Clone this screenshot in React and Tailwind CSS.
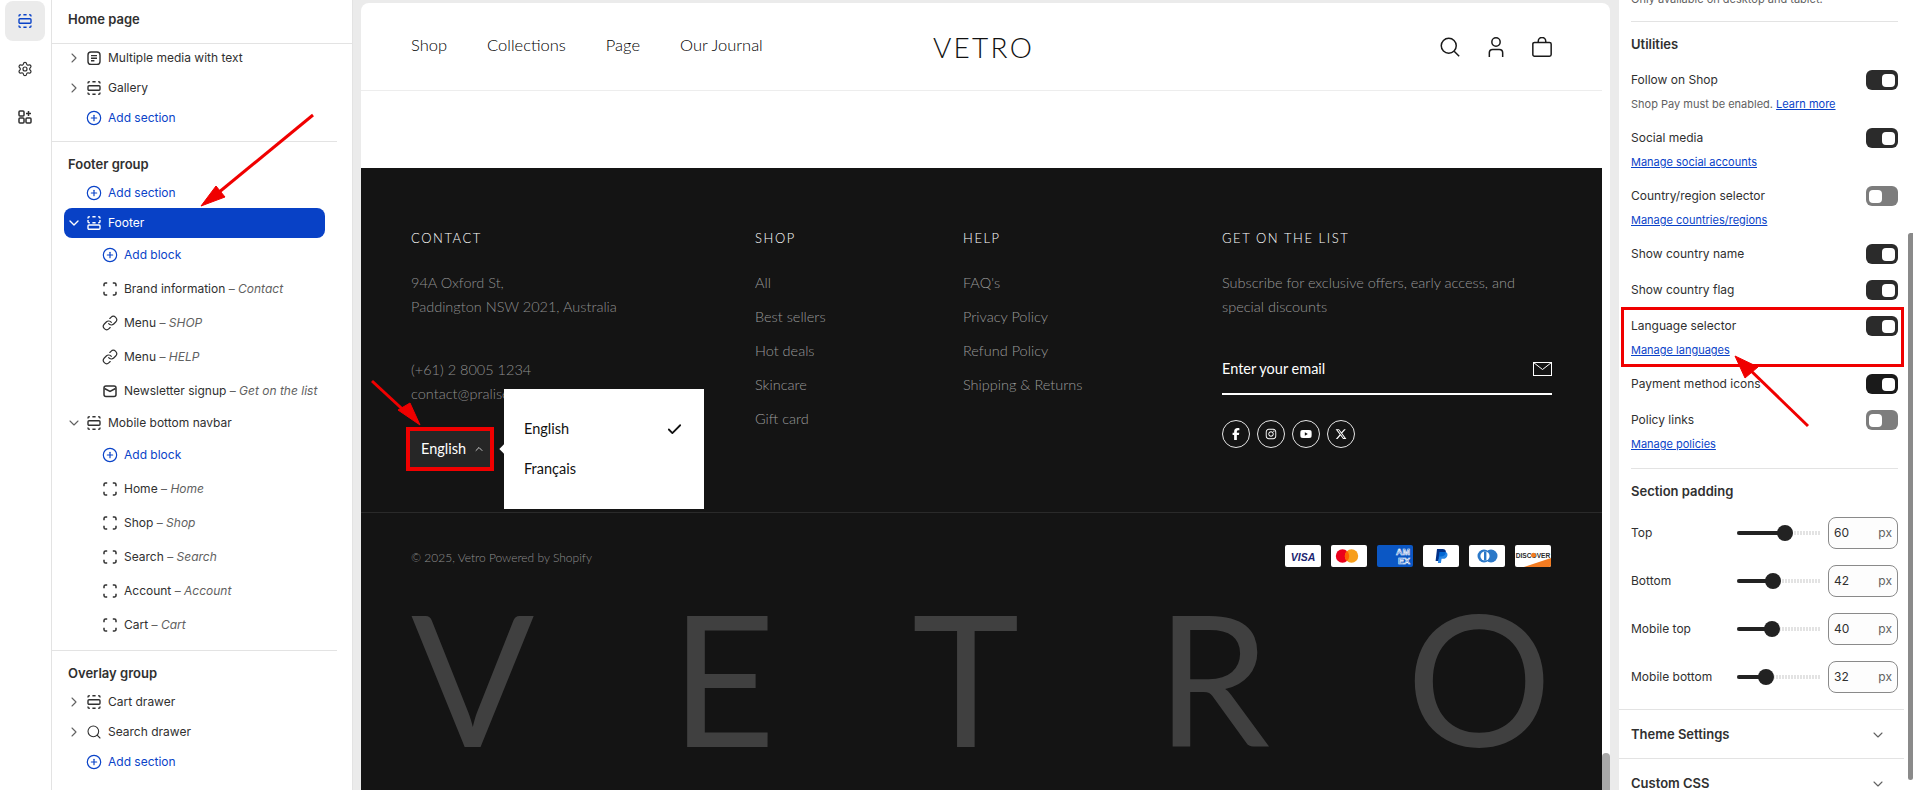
import { ChevronDown, ChevronRight, ChevronUp, CirclePlus, Check, Link as LinkIcon, Search, Settings } from 'lucide-react';
import { FaFacebookF, FaInstagram, FaYoutube, FaXTwitter } from 'react-icons/fa6';

const SectionIcon = ({ className = 'text-[#303030]' }) => (
  <svg viewBox="0 0 16 16" className={`w-4 h-4 shrink-0 ${className}`} fill="none" stroke="currentColor" strokeWidth="1.4">
    <rect x="2" y="5.8" width="12" height="4.4" rx="1" />
    <path d="M2 3.4V3a1.2 1.2 0 0 1 1.2-1.2h.6M6.4 1.8h3.2M12.2 1.8h.6A1.2 1.2 0 0 1 14 3v.4M2 12.6v.4a1.2 1.2 0 0 0 1.2 1.2h.6M6.4 14.2h3.2M12.2 14.2h.6a1.2 1.2 0 0 0 1.2-1.2v-.4" />
  </svg>
);

const FooterIcon = () => (
  <svg viewBox="0 0 16 16" className="w-4 h-4 shrink-0 text-white" fill="none" stroke="currentColor" strokeWidth="1.4">
    <rect x="2" y="10" width="12" height="4.2" rx="1" />
    <path d="M2 5v1.6A1.2 1.2 0 0 0 3.2 7.8h.6M6.4 7.8h3.2M12.2 7.8h.6A1.2 1.2 0 0 0 14 6.6V5M2 3.4V3a1.2 1.2 0 0 1 1.2-1.2h.6M6.4 1.8h3.2M12.2 1.8h.6A1.2 1.2 0 0 1 14 3v.4" />
  </svg>
);

const BlockIcon = () => (
  <svg viewBox="0 0 16 16" className="w-4 h-4 shrink-0 text-[#303030]" fill="none" stroke="currentColor" strokeWidth="1.5">
    <path d="M2 5.2V3.6a1.6 1.6 0 0 1 1.6-1.6h1.6M10.8 2h1.6A1.6 1.6 0 0 1 14 3.6v1.6M2 10.8v1.6A1.6 1.6 0 0 0 3.6 14h1.6M10.8 14h1.6a1.6 1.6 0 0 0 1.6-1.6v-1.6" />
  </svg>
);

const MediaIcon = () => (
  <svg viewBox="0 0 16 16" className="w-4 h-4 shrink-0 text-[#303030]" fill="none" stroke="currentColor" strokeWidth="1.4">
    <rect x="2" y="2" width="12" height="12.4" rx="3" />
    <path d="M5 5.600h6M5 8.200h6M5 10.800h3.400" />
  </svg>
);

const AppsIcon = () => (
  <svg viewBox="0 0 16 16" className="w-4 h-4 text-[#303030]" fill="none" stroke="currentColor" strokeWidth="1.5">
    <rect x="2" y="2" width="5" height="5" rx="1" />
    <rect x="2" y="9" width="5" height="5" rx="1" />
    <rect x="9" y="9" width="5" height="5" rx="1" />
    <path d="M11.500 2v5M9 4.500h5" />
  </svg>
);

const MailIcon = () => (
  <svg viewBox="0 0 16 16" className="w-4 h-4 shrink-0 text-[#303030]" fill="none" stroke="currentColor" strokeWidth="1.5">
    <rect x="2" y="3" width="12" height="10.500" rx="2" />
    <path d="m2.500 5.500 5.500 3 5.500-3" />
  </svg>
);

const Caret = ({ open }) => (
  <span className="w-[22px] shrink-0 flex justify-start pl-[2px]">
    {open ? <ChevronDown size={16} strokeWidth={1.6} className="text-[#616161]" /> : <ChevronRight size={16} strokeWidth={1.6} className="text-[#616161]" />}
  </span>
);

function SectionRow({ icon, label, open }) {
  return (
    <div className="mx-3 h-[30px] flex items-center gap-[6px]">
      <div className="flex items-center">
        <Caret open={open} />
        {icon}
      </div>
      <span>{label}</span>
    </div>
  );
}

function AddRow({ label, block }) {
  return (
    <div className={block ? 'mx-3 h-[34px] pl-[38px] flex items-center gap-[6px] text-[#0a43c8]' : 'mx-3 h-[30px] pl-[22px] flex items-center gap-[6px] text-[#0a43c8]'}>
      <CirclePlus size={16} strokeWidth={1.8} className="shrink-0" />
      <span>{label}</span>
    </div>
  );
}

function BlockRow({ icon, name, note }) {
  return (
    <div className="mx-3 h-[34px] pl-[38px] flex items-center gap-[6px] whitespace-nowrap">
      {icon || <BlockIcon />}
      <span>
        {name} <span className="text-[#616161]">– <i>{note}</i></span>
      </span>
    </div>
  );
}

function Heading({ children }) {
  return <div className="mx-3 pl-1 pt-3 pb-1 h-[36px] leading-5 font-semibold text-[13px]">{children}</div>;
}

function SectionsPanel() {
  const link = <LinkIcon size={16} strokeWidth={1.8} className="shrink-0 text-[#303030]" />;
  return (
    <div className="w-[301px] h-full bg-white border-r border-[#e3e3e3] shrink-0 font-['Inter',sans-serif] text-[12px] text-[#303030] overflow-hidden">
      <div className="h-[44px] border-b border-[#e3e3e3] pl-[16px] pt-[9px] text-[13px] font-semibold leading-5">Home page</div>
      <div className="w-[285px] -mt-px">
        <SectionRow icon={<MediaIcon />} label="Multiple media with text" />
        <SectionRow icon={<SectionIcon />} label="Gallery" />
        <AddRow label="Add section" />
        <div className="mt-2 border-b border-[#e3e3e3]" />
        <Heading>Footer group</Heading>
        <AddRow label="Add section" />
        <div className="mx-3 h-[30px] flex items-center gap-[6px] bg-[#0841c6] rounded-lg text-white">
          <div className="flex items-center">
            <span className="w-[22px] flex pl-[2px]"><ChevronDown size={16} strokeWidth={2} /></span>
            <FooterIcon />
          </div>
          <span>Footer</span>
        </div>
        <AddRow label="Add block" block />
        <BlockRow name="Brand information" note="Contact" />
        <BlockRow icon={link} name="Menu" note="SHOP" />
        <BlockRow icon={link} name="Menu" note="HELP" />
        <BlockRow icon={<MailIcon />} name="Newsletter signup" note="Get on the list" />
        <SectionRow icon={<SectionIcon />} label="Mobile bottom navbar" open />
        <AddRow label="Add block" block />
        <BlockRow name="Home" note="Home" />
        <BlockRow name="Shop" note="Shop" />
        <BlockRow name="Search" note="Search" />
        <BlockRow name="Account" note="Account" />
        <BlockRow name="Cart" note="Cart" />
        <div className="mt-2 border-b border-[#e3e3e3]" />
        <Heading>Overlay group</Heading>
        <SectionRow icon={<SectionIcon />} label="Cart drawer" />
        <SectionRow icon={<Search size={16} strokeWidth={1.6} className="shrink-0 text-[#303030]" />} label="Search drawer" />
        <AddRow label="Add section" />
      </div>
    </div>
  );
}

function Toggle({ on = true, dark }) {
  return (
    <div className={`w-8 h-5 rounded-[6px] flex items-center px-[3px] shrink-0 ${on ? 'justify-end' : 'justify-start'} ${on ? (dark ? 'bg-[#1a1a1a]' : 'bg-[#2b2b2b]') : 'bg-[#7d7d7d]'}`}>
      <div className="w-[13px] h-[13px] rounded-[4px] bg-white" />
    </div>
  );
}

function ToggleRow({ label, on, dark, link, children }) {
  return (
    <div>
      <div className="flex items-center justify-between h-5">
        <span>{label}</span>
        <Toggle on={on} dark={dark} />
      </div>
      {link && <div className="mt-[6px] h-4 leading-4 text-[11px]"><a className="text-[#0a43c8] underline">{link}</a></div>}
      {children}
    </div>
  );
}

function SliderRow({ label, value, pos }) {
  return (
    <div className="flex items-center h-8">
      <span className="w-[106px] shrink-0">{label}</span>
      <div className="relative w-[83px] h-1 shrink-0 bg-[repeating-linear-gradient(90deg,#e3e3e3_0_2px,transparent_2px_3px)]">
        <div className="absolute left-0 top-0 h-1 bg-[#222222] rounded-full" style={{ width: pos }} />
        <div className="absolute -top-[6px] w-4 h-4 rounded-full bg-[#222222]" style={{ left: pos - 8 }} />
      </div>
      <div className="ml-2 w-[70px] h-8 rounded-lg border border-[#8a8a8a] bg-[#fdfdfd] flex items-center justify-between px-[5px] text-[#303030]">
        <span>{value}</span>
        <span className="text-[#616161]">px</span>
      </div>
    </div>
  );
}

function SettingsPanel() {
  return (
    <div className="relative w-[294px] h-full bg-white shrink-0 font-['Inter',sans-serif] text-[12px] text-[#303030] overflow-hidden">
      <div className="w-[285px]">
        <div className="px-3 pr-[6px]">
          <div className="-mt-[9px] h-4 leading-4 text-[11px] text-[#616161]">Only available on desktop and tablet.</div>
          <div className="mt-[14px] border-b border-[#e3e3e3]" />
          <div className="pt-3 h-8 leading-5 text-[13px] font-semibold">Utilities</div>
          <div className="mt-4 flex flex-col gap-4">
            <ToggleRow label="Follow on Shop">
              <div className="mt-[6px] h-4 leading-4 text-[11px] text-[#616161]">
                Shop Pay must be enabled. <a className="text-[#0a43c8] underline">Learn more</a>
              </div>
            </ToggleRow>
            <ToggleRow label="Social media" link="Manage social accounts" />
            <ToggleRow label="Country/region selector" on={false} link="Manage countries/regions" />
            <ToggleRow label="Show country name" />
            <ToggleRow label="Show country flag" />
            <ToggleRow label="Language selector" link="Manage languages" />
            <ToggleRow label="Payment method icons" dark />
            <ToggleRow label="Policy links" on={false} link="Manage policies" />
          </div>
          <div className="mt-4 border-b border-[#e3e3e3]" />
          <div className="pt-3 h-8 leading-5 text-[13px] font-semibold">Section padding</div>
          <div className="mt-4 flex flex-col gap-4">
            <SliderRow label="Top" value="60" pos={48} />
            <SliderRow label="Bottom" value="42" pos={36} />
            <SliderRow label="Mobile top" value="40" pos={35} />
            <SliderRow label="Mobile bottom" value="32" pos={29} />
          </div>
        </div>
        <div className="mt-4 border-t border-[#e3e3e3] h-[49px] pl-3 pr-[18px] pt-[2px] flex items-center justify-between text-[13px] font-semibold">
          <span>Theme Settings</span>
          <ChevronDown size={16} strokeWidth={1.6} className="text-[#616161]" />
        </div>
        <div className="border-t border-[#e3e3e3] h-[49px] pl-3 pr-[18px] pt-[2px] flex items-center justify-between text-[13px] font-semibold">
          <span>Custom CSS</span>
          <ChevronDown size={16} strokeWidth={1.6} className="text-[#616161]" />
        </div>
      </div>
      <div className="absolute right-0 top-[233px] w-[5px] h-[547px] rounded-l-full rounded-b-full bg-[#8a8a8a]" />
    </div>
  );
}

function PayCard({ bg = 'bg-white', children }) {
  return (
    <div className={`w-9 h-[22px] rounded-[2px] overflow-hidden ${bg}`}>
      <svg viewBox="0 0 36 22" className="w-full h-full">{children}</svg>
    </div>
  );
}

function PayIcons() {
  return (
    <div className="flex gap-[10px]">
      <PayCard>
        <text x="18" y="15.500" textAnchor="middle" fontFamily="Liberation Sans, sans-serif" fontSize="10.500" fontWeight="700" fontStyle="italic" fill="#1a1f71">VISA</text>
      </PayCard>
      <PayCard>
        <circle cx="11.500" cy="11" r="6.700" fill="#eb001b" />
        <circle cx="20.500" cy="11" r="6.700" fill="#f79e1b" />
        <path d="M16 6a6.700 6.700 0 0 1 0 10 6.700 6.700 0 0 1 0-10z" fill="#ff5f00" />
      </PayCard>
      <PayCard bg="bg-[#0b57c4]">
        <text x="19" y="10" fontFamily="Liberation Sans, sans-serif" fontSize="9" fontWeight="700" fill="none" stroke="#fff" strokeWidth="0.6">AM</text>
        <text x="21" y="19" fontFamily="Liberation Sans, sans-serif" fontSize="9" fontWeight="700" fill="none" stroke="#fff" strokeWidth="0.6">EX</text>
      </PayCard>
      <PayCard>
        <path d="M14 4h5.500c2.600 0 3.800 1.600 3.300 3.700-.5 2.500-2.400 3.700-4.800 3.700h-1.600l-.9 4.600H12.600z" fill="#003087" />
        <path d="M16.400 7h5.200c2.400 0 3.200 1.500 2.800 3.400-.5 2.300-2.200 3.400-4.400 3.400h-1.400l-.7 4.200h-3z" fill="#0070e0" opacity="0.85" />
      </PayCard>
      <PayCard>
        <circle cx="15" cy="11" r="6.500" fill="#2a78c8" />
        <circle cx="22" cy="11" r="6.500" fill="#2a78c8" />
        <circle cx="16" cy="11" r="4.600" fill="#fff" />
        <rect x="15" y="6.500" width="2.400" height="9" fill="#2a78c8" />
      </PayCard>
      <PayCard>
        <path d="M9 22 36 13v9z" fill="#f27b21" />
        <text x="18" y="12.500" textAnchor="middle" fontFamily="Liberation Sans, sans-serif" fontSize="6.600" fontWeight="700" fill="#2b2b2b">DISCOVER</text>
        <circle cx="18.500" cy="10.200" r="2.400" fill="#f27b21" />
      </PayCard>
    </div>
  );
}

function FooterLinks({ title, links }) {
  return (
    <div>
      <div className="h-5 leading-5 text-[13px] tracking-[0.12em] text-white">{title}</div>
      <div className="mt-[23px] flex flex-col gap-[10px]">
        {links.map((l) => (
          <div key={l} className="h-6 leading-6 text-[#9a9a9a]">{l}</div>
        ))}
      </div>
    </div>
  );
}

function Preview() {
  const socials = [FaFacebookF, FaInstagram, FaYoutube, FaXTwitter];
  return (
    <div className="relative mt-[3px] w-[1249px] ml-2 mr-[9px] shrink-0 h-[787px] bg-white rounded-t-lg overflow-hidden font-['Lato',sans-serif] font-light">
      <div className="w-[1241px]">
        <div className="h-[88px] border-b border-[#ededed] px-[50px] flex items-center justify-between text-[16.500px] text-black">
          <div className="flex items-center gap-[40px] pb-[2px]">
            <span>Shop</span>
            <span>Collections</span>
            <span>Page</span>
            <span>Our Journal</span>
          </div>
          <div className="absolute left-[572px] top-[24px] text-[28px] tracking-[0.08em] leading-10 text-[#111]">VETRO</div>
          <div className="flex items-center gap-[26px] text-[#1a1a1a]">
            <svg viewBox="0 0 24 24" className="w-5 h-5" fill="none" stroke="currentColor" strokeWidth="1.800"><circle cx="10.500" cy="10.500" r="9" /><path d="m17 17 6 6" /></svg>
            <svg viewBox="0 0 24 24" className="w-5 h-5" fill="none" stroke="currentColor" strokeWidth="1.800"><circle cx="12" cy="6" r="5" /><path d="M4 24v-5a4 4 0 0 1 4-4h8a4 4 0 0 1 4 4v5" /></svg>
            <svg viewBox="0 0 24 24" className="w-5 h-5" fill="none" stroke="currentColor" strokeWidth="1.800"><rect x="1" y="6.500" width="22" height="16.500" rx="2" /><path d="M7.500 6.500V5a4.500 4.500 0 0 1 9 0v1.500" /></svg>
          </div>
        </div>
        <div className="h-[77px]" />
        <div className="h-[622px] bg-[#141414] overflow-hidden">
          <div className="h-[345px] border-b border-[#2a2a2a] px-[50px] pt-[60px]">
            <div className="grid grid-cols-[344px_208px_259px_330px] text-[14.500px]">
              <div className="relative">
                <div className="h-5 leading-5 text-[13px] tracking-[0.12em] text-white">CONTACT</div>
                <div className="mt-[23px] leading-6 text-[#8f8f8f]">94A Oxford St,<br />Paddington NSW 2021, Australia</div>
                <div className="mt-[39px] leading-6 text-[#8f8f8f]">(+61) 2 8005 1234<br />contact@praliseshop.com</div>
                <div className="relative mt-[21px] w-[88px] h-[44px] -ml-[5px] border-4 border-[#f00000] bg-[#262626] flex items-center gap-[7px] pl-[11px] text-white font-normal">
                  English <ChevronUp size={12} strokeWidth={1.5} />
                  <div className="absolute left-[91px] top-[14px] w-2 h-2 rotate-45 bg-white" />
                  <div className="absolute left-[94px] -top-[42px] w-[200px] h-[120px] bg-white text-[#111] pl-5 pr-[21px] pt-[28px]">
                    <div className="h-6 leading-6 flex items-center justify-between">English <Check size={17} strokeWidth={2.5} /></div>
                    <div className="mt-4 h-6 leading-6">Français</div>
                  </div>
                </div>
              </div>
              <FooterLinks title="SHOP" links={['All', 'Best sellers', 'Hot deals', 'Skincare', 'Gift card']} />
              <FooterLinks title="HELP" links={["FAQ's", 'Privacy Policy', 'Refund Policy', 'Shipping & Returns']} />
              <div>
                <div className="h-5 leading-5 text-[13px] tracking-[0.12em] text-white">GET ON THE LIST</div>
                <div className="mt-[23px] leading-6 text-[#9a9a9a]">Subscribe for exclusive offers, early access, and special discounts</div>
                <div className="mt-[38px] h-[38px] border-b-2 border-white flex items-start justify-between text-white">
                  <span className="leading-6 font-normal">Enter your email</span>
                  <svg viewBox="0 0 19 14" className="w-[19px] h-[14px] mt-[5px]" fill="none" stroke="currentColor" strokeWidth="1"><rect x="0.500" y="0.500" width="18" height="13" /><path d="m0.500 0.500 9 7 9-7" /></svg>
                </div>
                <div className="mt-[25px] flex gap-[7px]">
                  {socials.map((Icon, i) => (
                    <div key={i} className="w-[28px] h-[28px] rounded-full border border-[#e6e6e6] flex items-center justify-center text-white text-[12px]">
                      <Icon />
                    </div>
                  ))}
                </div>
              </div>
            </div>
          </div>
          <div className="pl-[50px] pr-[51px] pt-[32px] flex items-center justify-between">
            <span className="text-[12px] text-[#8f8f8f] mt-[3px]">© 2025, Vetro Powered by Shopify</span>
            <PayIcons />
          </div>
          <div className="px-[50px] mt-[30px] h-[160px] flex justify-between text-[182px] leading-[160px] font-normal text-[#404040]">
            <span>V</span>
            <span>E</span>
            <span>T</span>
            <span>R</span>
            <span>O</span>
          </div>
        </div>
      </div>
      <div className="absolute right-0 top-[750px] w-2 h-[37px] rounded-t-full bg-[#a8a8a8]" />
    </div>
  );
}

function Annotations() {
  return (
    <svg viewBox="0 0 1913 790" className="absolute inset-0 w-[1913px] h-[790px] pointer-events-none">
      <rect x="1622.500" y="308.500" width="280" height="57" fill="none" stroke="#f00000" strokeWidth="3" />
      <g fill="#f00000" stroke="#f00000">
        <path d="M313 115 218 193" strokeWidth="3" fill="none" />
        <path d="M201 206 216 186 225 197z" />
        <path d="M372 381 412 418" strokeWidth="3" fill="none" />
        <path d="M420 425 398 410 410 403z" />
        <path d="M1808 426 1746 366" strokeWidth="3" fill="none" />
        <path d="M1735 356 1758 367 1745 378z" />
      </g>
    </svg>
  );
}

export default function App() {
  return (
    <div className="relative w-[1913px] h-[790px] flex bg-[#ebebeb] overflow-hidden">
      <div className="w-[52px] h-full bg-white border-r border-[#e3e3e3] shrink-0 flex flex-col items-start pl-[5px] gap-2 pt-px">
        <div className="w-10 h-10 rounded-lg bg-[#ebebeb] flex items-center justify-center">
          <SectionIcon className="text-[#0a43c8]" />
        </div>
        <div className="w-10 h-10 rounded-lg flex items-center justify-center"><Settings size={16} strokeWidth={1.8} className="text-[#303030]" /></div>
        <div className="w-10 h-10 rounded-lg flex items-center justify-center"><AppsIcon /></div>
      </div>
      <SectionsPanel />
      <Preview />
      <SettingsPanel />
      <Annotations />
    </div>
  );
}
